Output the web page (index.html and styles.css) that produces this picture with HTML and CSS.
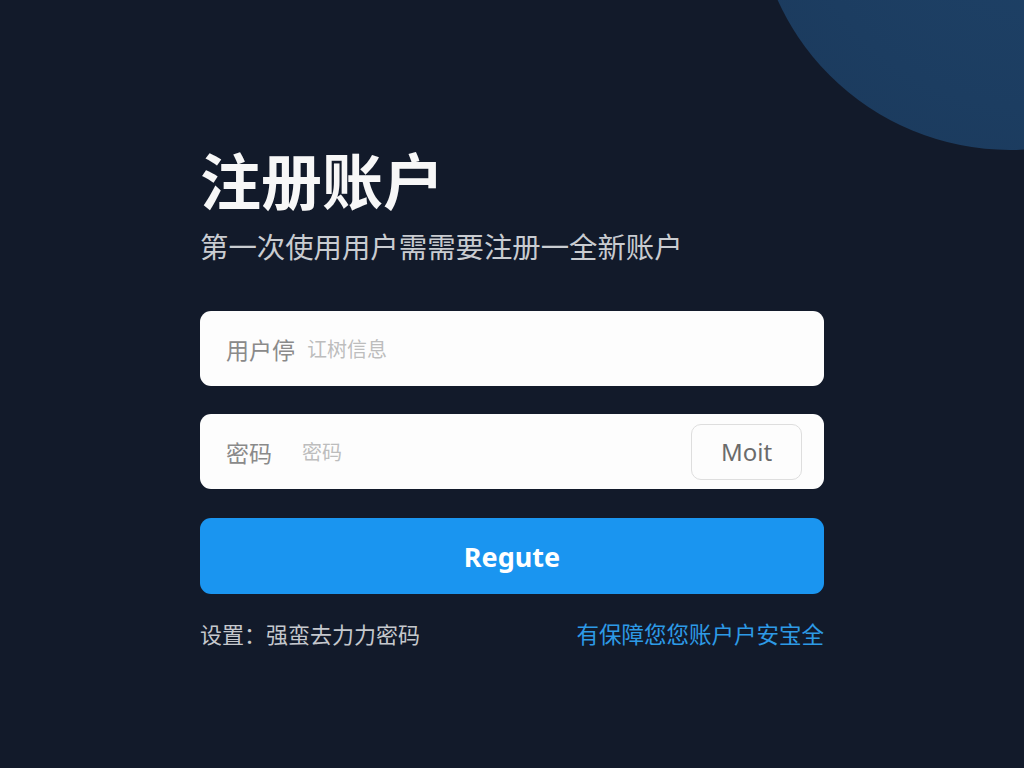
FILE: index.html
```html
<!DOCTYPE html>
<html lang="zh-CN">
<head>
<meta charset="utf-8">
<title>注册账户</title>
<link rel="stylesheet" href="styles.css">
</head>
<body>
<div class="backdrop"><div class="orb"></div></div>
<main class="panel">
  <h1 class="title">注册账户</h1>
  <p class="subtitle">第一次使用用户需需要注册一全新账户</p>
  <div class="field">
    <span class="label">用户停</span>
    <span class="placeholder">讧树信息</span>
  </div>
  <div class="field">
    <span class="label">密码</span>
    <span class="placeholder pw">密码</span>
    <button class="toggle">Moit</button>
  </div>
  <button class="submit">Regute</button>
  <div class="footer">
    <span class="hint">设置：强蛮去力力密码</span>
    <a class="safe">有保障您您账户户安宝全</a>
  </div>
</main>
</body>
</html>
```

FILE: styles.css
```css
html, body {
  margin: 0;
  height: 100%;
}
body {
  background: #121a2a;
  font-family: "Noto Sans CJK SC", "Noto Sans", sans-serif;
  overflow: hidden;
  position: relative;
}
.backdrop {
  position: absolute;
  inset: 0;
  overflow: hidden;
}
.orb {
  position: absolute;
  left: 755px;
  top: -360px;
  width: 510px;
  height: 510px;
  border-radius: 50%;
  background: radial-gradient(circle at 55% 45%, #1e4268 0%, #1c3d61 60%, #1b395b 100%);
}
.panel {
  position: relative;
  width: 624px;
  margin-left: 200px;
  padding-top: 143px;
  display: flex;
  flex-direction: column;
}
.title {
  margin: 0;
  font-size: 61px;
  line-height: 72px;
  font-weight: 700;
  color: #f7f7f7;
  letter-spacing: 0;
}
.subtitle {
  margin: 14px 0 0;
  font-size: 28.4px;
  line-height: 34px;
  color: #c9ccd1;
}
.field {
  margin-top: 48px;
  height: 75px;
  border-radius: 11px;
  background: #fdfdfd;
  display: flex;
  align-items: center;
  padding: 0 22px 0 26px;
  box-sizing: border-box;
}
.field + .field {
  margin-top: 28px;
}
.label {
  font-size: 23px;
  color: #8a8a8a;
}
.placeholder {
  margin-left: 12px;
  font-size: 20px;
  color: #bdbdbd;
}
.placeholder.pw {
  margin-left: 30px;
}
.toggle {
  margin-left: auto;
  width: 111px;
  height: 56px;
  border: 1px solid #dedede;
  border-radius: 10px;
  background: #fdfdfd;
  font-family: "Noto Sans", "Open Sans", sans-serif;
  font-size: 24px;
  color: #6b6b6b;
}
.submit {
  margin-top: 29px;
  height: 76px;
  border: none;
  border-radius: 11px;
  background: #1a95f0;
  color: #ffffff;
  font-family: "Noto Sans", "Open Sans", sans-serif;
  font-size: 27px;
  font-weight: 700;
}
.footer {
  margin-top: 23px;
  display: flex;
  justify-content: space-between;
  align-items: center;
  font-size: 22px;
  line-height: 32px;
}
.hint {
  color: #c5c8cd;
}
.safe {
  color: #2d9ae6;
  font-size: 22.5px;
}
```
